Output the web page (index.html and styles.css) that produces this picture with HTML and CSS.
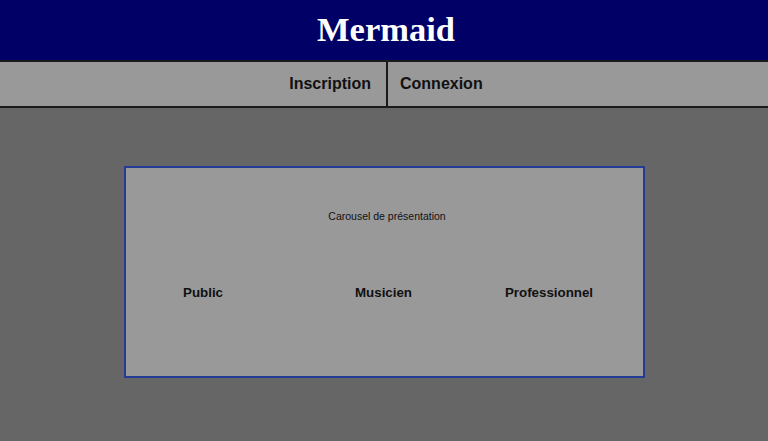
FILE: index.html
```html
<!DOCTYPE html>
<html lang="fr">
<head>
<meta charset="utf-8">
<title>Mermaid</title>
<link rel="stylesheet" href="styles.css">
</head>
<body>
<header class="site-header">
  <h1 class="site-title">Mermaid</h1>
</header>
<nav class="site-nav">
  <a class="nav-item nav-left" href="#">Inscription</a>
  <a class="nav-item nav-right" href="#">Connexion</a>
</nav>
<main class="main">
  <section class="carousel">
    <p class="carousel-title">Carousel de présentation</p>
    <div class="profiles">
      <span class="profile">Public</span>
      <span class="profile">Musicien</span>
      <span class="profile">Professionnel</span>
    </div>
  </section>
</main>
</body>
</html>
```
FILE: styles.css
```css
html, body {
  margin: 0;
  padding: 0;
  height: 100%;
}
body {
  background: #666666;
  font-family: "Liberation Sans", Arial, sans-serif;
  color: #111;
}
.site-header {
  background: #000066;
  height: 60px;
  display: flex;
  align-items: center;
  justify-content: center;
  border-bottom: 2px solid #1a1a1a;
}
.site-title {
  margin: 0;
  font-family: "Liberation Serif", "Times New Roman", serif;
  font-weight: bold;
  font-size: 34.5px;
  color: #ffffff;
  line-height: 1;
  padding-left: 4px;
  padding-bottom: 2px;
}
.site-nav {
  background: #999999;
  height: 44px;
  display: flex;
  border-bottom: 2px solid #1a1a1a;
}
.nav-item {
  color: #111;
  text-decoration: none;
  font-weight: bold;
  font-size: 16px;
  display: flex;
  align-items: center;
}
.nav-left {
  box-sizing: border-box;
  flex: 0 0 388px;
  justify-content: flex-end;
  padding-right: 15px;
  border-right: 2px solid #1a1a1a;
}
.nav-right {
  padding-left: 12px;
}
.main {
  padding-top: 58px;
}
.carousel {
  box-sizing: border-box;
  width: 521px;
  height: 212px;
  margin: 0 auto;
  background: #999999;
  border: 2px solid #263b96;
  padding-top: 41px;
}
.carousel-title {
  margin: 0;
  font-size: 10.5px;
  line-height: 14px;
  text-align: center;
  padding-left: 6px;
  color: #111;
}
.profiles {
  display: grid;
  grid-template-columns: 155px 206px 125px;
  margin-top: 62px;
}
.profile {
  text-align: center;
  font-weight: bold;
  font-size: 13.33px;
  line-height: 16px;
  color: #111;
}
```
